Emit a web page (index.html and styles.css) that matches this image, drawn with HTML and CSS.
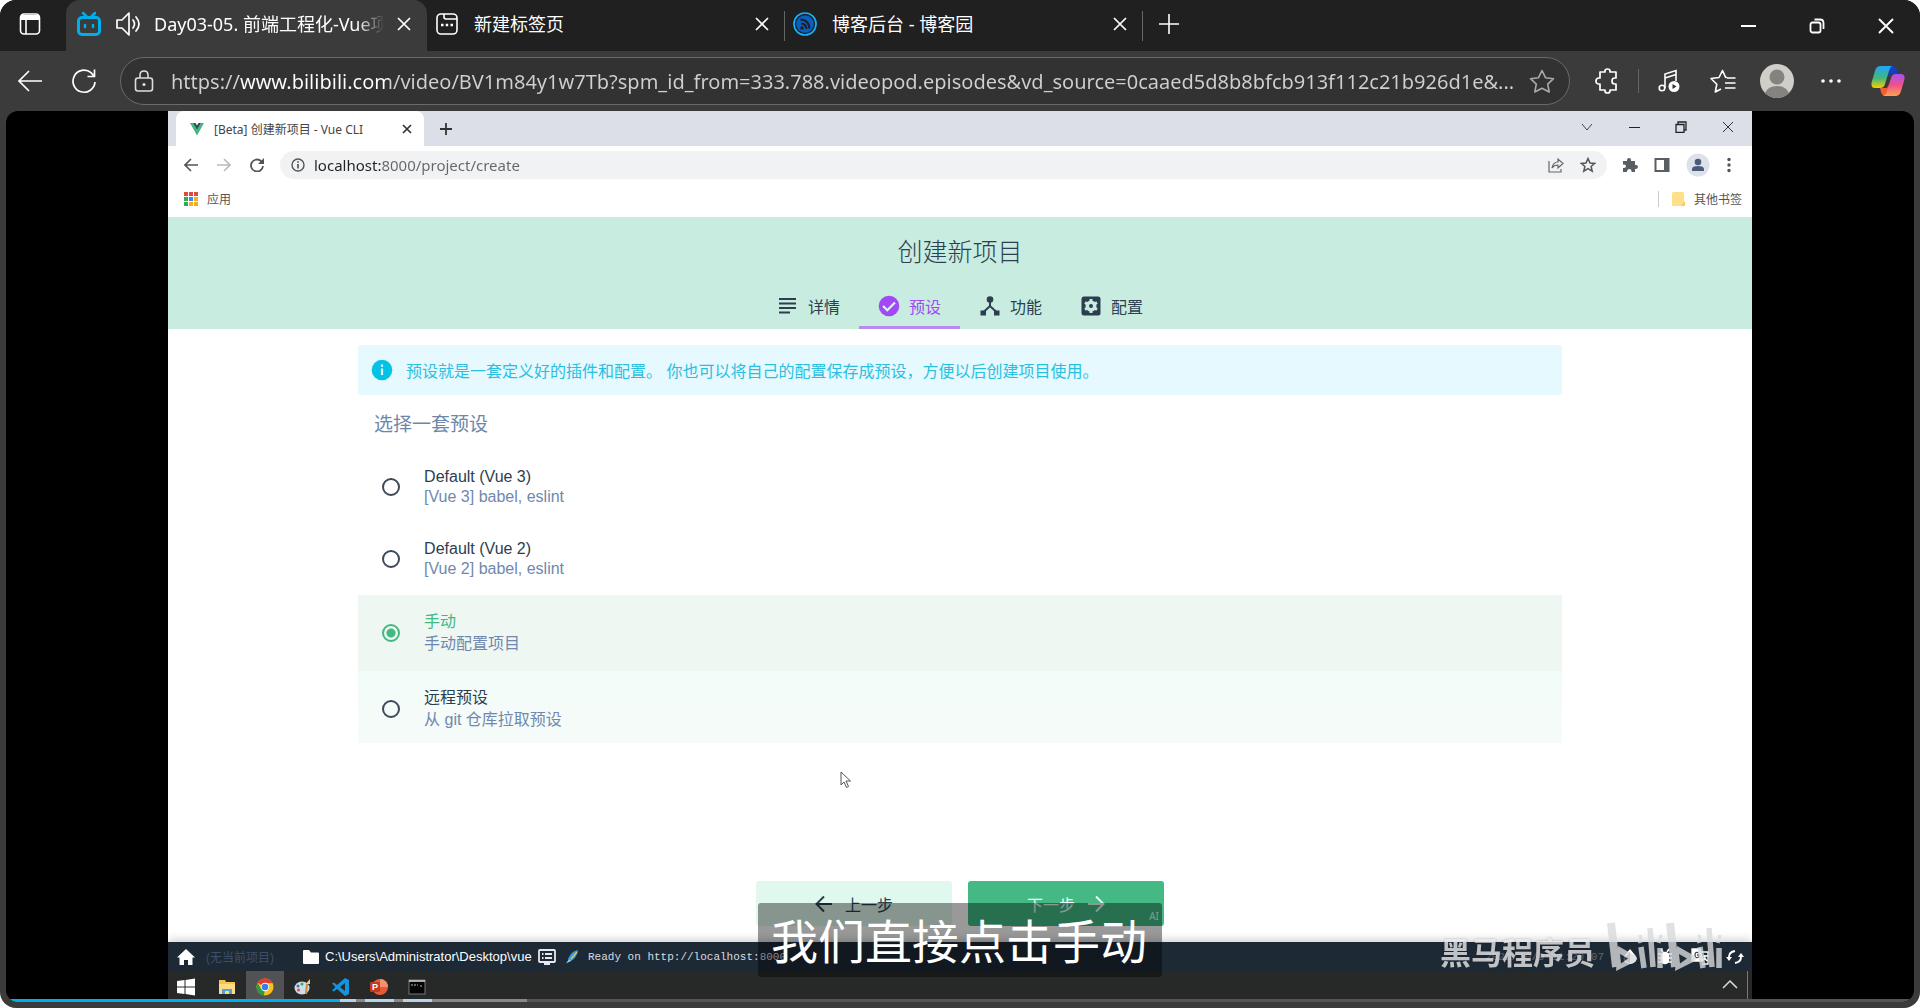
FILE: index.html
```html
<!DOCTYPE html>
<html lang="zh-CN">
<head>
<meta charset="utf-8">
<title>Day03-05. 前端工程化-Vue项目</title>
<link rel="stylesheet" href="styles.css">
</head>
<body>
<div class="window">
  <header class="tabstrip">
    <button class="tab-actions" aria-label="标签页操作">
      <svg width="24" height="24" viewBox="0 0 24 24" fill="none" stroke="#fff" stroke-width="1.6"><rect x="2.500" y="2" width="19" height="20" rx="3.500"/><path d="M3 5.500h18" stroke-width="5"/><path d="M8 7v15"/></svg>
    </button>
    <div class="tab tab-active">
      <svg width="26" height="26" viewBox="0 0 26 26" fill="none" stroke="#00aeec" stroke-width="3" stroke-linecap="round" stroke-linejoin="round"><rect x="2.500" y="6.500" width="21" height="17" rx="3.500"/><path d="M7 2l4 4M19 2l-4 4M9 14v2M17 14v2" stroke-width="2.500"/></svg>
      <svg class="sound" width="26" height="28" viewBox="0 0 26 28" fill="none" stroke="#fff" stroke-width="1.700" stroke-linejoin="round" stroke-linecap="round"><path d="M2 10v8h5l7 7V3L7 10z"/><path d="M18 10q3 4 0 8M21 7q6 7 0 14"/></svg>
      <span class="tab-title fade">Day03-05. 前端工程化-Vue项目</span>
      <button class="close" aria-label="关闭"><svg width="14" height="14" viewBox="0 0 14 14" stroke="#fff" stroke-width="1.700"><path d="M1 1l12 12M13 1L1 13"/></svg></button>
    </div>
    <div class="tab">
      <svg width="24" height="24" viewBox="0 0 24 24" fill="none" stroke="#fff" stroke-width="1.600"><rect x="2" y="2" width="20" height="20" rx="4"/><path d="M9 2v3q0 2 2 2h11"/><path d="M6 13h2.500M10.700 13h2.500M15.500 13H18" stroke-width="2.500"/></svg>
      <span class="tab-title">新建标签页</span>
      <button class="close" aria-label="关闭"><svg width="14" height="14" viewBox="0 0 14 14" stroke="#fff" stroke-width="1.700"><path d="M1 1l12 12M13 1L1 13"/></svg></button>
    </div>
    <div class="tab tab-divided">
      <svg width="24" height="24" viewBox="0 0 24 24" fill="none"><circle cx="12" cy="12" r="11" stroke="#1ab0f0" stroke-width="1.700" fill="#123"/><circle cx="12" cy="12" r="8.800" fill="#0b5fc0"/><path d="M8 11.500q5 0 5.500 5.500M7.500 7.500q8.500 .5 9 9" stroke="#202020" stroke-width="2.200"/><circle cx="9" cy="16" r="1.800" fill="#202020"/></svg>
      <span class="tab-title">博客后台 - 博客园</span>
      <button class="close" aria-label="关闭"><svg width="14" height="14" viewBox="0 0 14 14" stroke="#fff" stroke-width="1.700"><path d="M1 1l12 12M13 1L1 13"/></svg></button>
    </div>
    <button class="new-tab" aria-label="新建标签页"><svg width="22" height="22" viewBox="0 0 22 22" stroke="#fff" stroke-width="1.600"><path d="M11 1v20M1 11h20"/></svg></button>
    <div class="window-controls">
      <button aria-label="最小化"><svg width="16" height="16" viewBox="0 0 16 16" stroke="#fff" stroke-width="2"><path d="M1 8h15"/></svg></button>
      <button aria-label="还原"><svg width="16" height="16" viewBox="0 0 16 16" fill="none" stroke="#fff" stroke-width="1.800"><rect x="1.500" y="4.500" width="10" height="10" rx="2"/><path d="M5.500 1.500H11q3.500 0 3.500 3.500v6"/></svg></button>
      <button aria-label="关闭"><svg width="16" height="16" viewBox="0 0 16 16" stroke="#fff" stroke-width="1.900"><path d="M1 1l14 14M15 1L1 15"/></svg></button>
    </div>
  </header>

  <div class="toolbar">
    <button class="nav" aria-label="返回"><svg width="26" height="22" viewBox="0 0 26 22" fill="none" stroke="#fff" stroke-width="1.700"><path d="M25 11H2M12 1L2 11l10 10"/></svg></button>
    <button class="nav" aria-label="刷新"><svg width="26" height="26" viewBox="0 0 26 26" fill="none" stroke="#fff" stroke-width="1.700"><path d="M24 14a11 11 0 1 1-4-9.300L23 8M23.500 1.500V8.500H16.500"/></svg></button>
    <div class="omnibox">
      <svg width="22" height="22" viewBox="0 0 22 22" fill="none" stroke="#ddd" stroke-width="1.600"><rect x="2.500" y="8" width="17" height="13" rx="2.500"/><path d="M7 8V5q0-4 4-4t4 4v3"/><circle cx="11" cy="14.500" r=".8" fill="#ddd"/></svg>
      <input class="url" type="text" aria-label="地址栏" value="https://www.bilibili.com/video/BV1m84y1w7Tb?spm_id_from=333.788.videopod.episodes&amp;vd_source=0caaed5d8b8bfcb913f112c21b926d1e&amp;...">
      <button aria-label="收藏"><svg width="26" height="24" viewBox="0 0 26 24" fill="none" stroke="#aaa" stroke-width="1.600" stroke-linejoin="round"><path d="M13 1.500l3.500 7.200 8 1-5.800 5.500 1.500 7.800L13 19.200 5.800 23l1.500-7.800L1.500 9.700l8-1z"/></svg></button>
    </div>
    <div class="tools">
      <button class="tool" aria-label="扩展"><svg width="24" height="26" viewBox="0 0 24 26" fill="none" stroke="#fff" stroke-width="1.700" stroke-linejoin="round"><path d="M5 4h5V3q0-2 2.500-2T15 3v1h6v6h-1.500q-2.500 0-2.500 3t2.500 3H21v6h-6v1q0 2-2.500 2T10 23v-1H5v-6H4q-3 0-3-3t3-3h1z"/></svg></button>
      <span class="tool-sep"></span>
      <button class="tool" aria-label="媒体控制"><svg width="24" height="24" viewBox="0 0 24 24" fill="none" stroke="#fff" stroke-width="1.600"><circle cx="5" cy="19" r="2.800"/><path d="M8 19V5l11-3.500V12M8 9l11-3.500"/><circle cx="17" cy="17.500" r="5.500" fill="#fff" stroke="none"/><path d="M15.500 15v5l4-2.500z" fill="#333" stroke="none"/></svg></button>
      <button class="tool" aria-label="收藏夹"><svg width="26" height="24" viewBox="0 0 26 24" fill="none" stroke="#fff" stroke-width="1.600" stroke-linejoin="round"><path d="M17 8.500l-1.500-.3L12.500 1.500 9 8.500l-8 1 5.800 5.700L5.300 23l5.700-3M17 9h8.500M15 14h10.500M15 19h10.500"/></svg></button>
      <button class="tool" aria-label="个人资料"><svg width="34" height="34" viewBox="0 0 34 34"><circle cx="17" cy="17" r="17" fill="#cfcec9"/><circle cx="17" cy="13" r="7.500" fill="#85837f"/><path d="M5 29q3-7 12-7t12 7q-5 5-12 5T5 29z" fill="#85837f"/></svg></button>
      <button class="tool" aria-label="更多"><svg width="22" height="6" viewBox="0 0 22 6" fill="#fff"><circle cx="3" cy="3" r="1.800"/><circle cx="11" cy="3" r="1.800"/><circle cx="19" cy="3" r="1.800"/></svg></button>
      <button class="tool copilot" aria-label="Copilot"><svg width="34" height="32" viewBox="0 0 34 32"><defs><linearGradient id="cpA" x1="0" y1="0" x2="0" y2="1"><stop offset="0" stop-color="#20a7f5"/><stop offset=".55" stop-color="#43b77b"/><stop offset="1" stop-color="#f6cf00"/></linearGradient><linearGradient id="cpB" x1="0" y1="0" x2="0" y2="1"><stop offset="0" stop-color="#a553f0"/><stop offset=".5" stop-color="#f0508b"/><stop offset="1" stop-color="#ffa252"/></linearGradient></defs><path d="M17 1h4q4 0 5 4l1 4h-6q-4 0-5 4z" fill="#123fc4"/><path d="M9 23h7l2-4-1 9q-1 3-3 3-3 0-4-4z" fill="#f0602f"/><path d="M10 1h11q-2 1-3 5l-4 13q-1 4-5 4H4q-5 0-3-7L4 6q1-5 6-5z" fill="url(#cpA)"/><path d="M24 31H12q3-1 4-5l4-13q1-4 5-4h5q5 0 3 7l-3 10q-1 5-6 5z" fill="url(#cpB)"/></svg></button>
    </div>
  </div>

  <main class="stage">
    <div class="video">
      <div class="c-tabs">
        <div class="c-tab">
          <svg width="14" height="14" viewBox="0 0 14 14"><path d="M0 1h3l4 7 4-7h3L7 13.500z" fill="#41b883"/><path d="M3 1h2.500L7 3.500 8.500 1H11L7 8z" fill="#35495e"/></svg>
          <span>[Beta] 创建新项目 - Vue CLI</span>
          <button aria-label="关闭"><svg width="10" height="10" viewBox="0 0 10 10" stroke="#333" stroke-width="1.700"><path d="M1 1l8 8M9 1L1 9"/></svg></button>
        </div>
        <button class="c-new" aria-label="新标签"><svg width="14" height="14" viewBox="0 0 14 14" stroke="#333" stroke-width="1.800"><path d="M7 1v12M1 7h12"/></svg></button>
        <div class="c-controls">
          <svg width="12" height="12" viewBox="0 0 12 12" fill="none" stroke="#444"><path d="M1 3l5 6 5-6"/></svg>
          <svg width="12" height="12" viewBox="0 0 12 12" fill="none" stroke="#222"><path d="M1 6.500h11"/></svg>
          <svg width="12" height="12" viewBox="0 0 12 12" fill="none" stroke="#222" stroke-width="1.300"><path d="M1 3.500h8v8H1zM3 3V1h8v8H9"/></svg>
          <svg width="12" height="12" viewBox="0 0 12 12" fill="none" stroke="#333"><path d="M1 1l10 10M11 1L1 11"/></svg>
        </div>
      </div>
      <div class="c-toolbar">
        <div class="c-nav">
          <svg width="14" height="14" viewBox="0 0 14 14" fill="none" stroke="#555" stroke-width="1.600"><path d="M14 7H1M7 1L1 7l6 6"/></svg>
          <svg width="14" height="14" viewBox="0 0 14 14" fill="none" stroke="#bbb" stroke-width="1.600"><path d="M0 7h13M7 1l6 6-6 6"/></svg>
          <svg width="14" height="14" viewBox="0 0 14 14" fill="none" stroke="#555" stroke-width="1.800"><path d="M13 8a6 6 0 1 1-2-5l2 2"/><path d="M14 0v6H8z" fill="#555" stroke="none"/></svg>
        </div>
        <div class="c-omnibox">
          <svg width="14" height="14" viewBox="0 0 14 14" fill="none" stroke="#555" stroke-width="1.400"><circle cx="7" cy="7" r="6"/><path d="M7 6v4.500M7 3.200v1.500" stroke-width="1.700"/></svg>
          <input class="c-url" type="text" aria-label="网址" value="localhost:8000/project/create">
          <svg width="16" height="16" viewBox="0 0 16 16" fill="none" stroke="#666" stroke-width="1.200"><path d="M1 4v11h12v-3M4 11q1-6 6-6V2l5 4.500-5 4.500V8q-4 0-6 3z"/></svg>
          <svg width="16" height="16" viewBox="0 0 16 16" fill="none" stroke="#555" stroke-width="1.500"><path d="M8 1.500l2 4.500 4.700.4-3.600 3.100 1.100 4.700L8 11.700l-4.200 2.500 1.100-4.700L1.300 6.400 6 6z"/></svg>
        </div>
        <div class="c-tools">
          <svg width="16" height="16" viewBox="0 0 16 16" fill="#5a5d62"><path d="M1 4h4V3q0-2 2-2t2 2v1h4v4h1q2 0 2 1.800T14 12h-1v3H9.500v-1Q9.500 12 7.500 12T5 14v1H1v-4h1q2 0 2-1.800T2 7.500H1z"/></svg>
          <svg width="16" height="16" viewBox="0 0 16 16" fill="none" stroke="#5a5d62" stroke-width="2"><path d="M1.500 2h13v12h-13z"/><path d="M12 2v12" stroke-width="4"/></svg>
          <svg width="24" height="24" viewBox="0 0 24 24"><circle cx="12" cy="12" r="11.500" fill="#dde1ea"/><circle cx="12" cy="9" r="3.300" fill="#4b5b78"/><path d="M6 18v-2q0-3 6-3t6 3v2z" fill="#4b5b78"/></svg>
          <svg width="6" height="16" viewBox="0 0 6 16" fill="#555"><circle cx="3" cy="2.500" r="1.700"/><circle cx="3" cy="8" r="1.700"/><circle cx="3" cy="13.500" r="1.700"/></svg>
        </div>
      </div>
      <div class="c-bookmarks">
        <svg width="14" height="14" viewBox="0 0 14 14"><path d="M0 0h4v4H0zM5 0h4v4H5zM10 0h4v4h-4z" fill="#e04a3f"/><path d="M0 5h4v4H0zM0 10h4v4H0z" fill="#34a853"/><path d="M5 5h4v4H5z" fill="#4285f4"/><path d="M10 5h4v4h-4zM5 10h4v4H5zM10 10h4v4h-4z" fill="#f2b01e"/></svg>
        <a href="#">应用</a>
        <span class="c-other">
          <svg width="14" height="16" viewBox="0 0 14 16"><rect x="1" y="1" width="12" height="14" rx="1.500" fill="#ffe08a"/><path d="M10 15l4-5v4q0 1-1 1z" fill="#f3cb55"/></svg>
          <a href="#">其他书签</a>
        </span>
      </div>

      <section class="head">
        <h1>创建新项目</h1>
        <nav class="steps">
          <a href="#"><svg width="22" height="22" viewBox="0 0 22 22" stroke="#2c3e50" stroke-width="2"><path d="M2 4h17M2 8.500h17M2 13h17M2 17.500h11"/></svg>详情</a>
          <a href="#" class="current"><svg width="22" height="22" viewBox="0 0 22 22" fill="none"><circle cx="11" cy="11" r="10.300" fill="#a249f5"/><path d="M5 11l4.300 4.300L17 7.500" stroke="#d8f5ee" stroke-width="2.200"/></svg>预设</a>
          <a href="#"><svg width="22" height="22" viewBox="0 0 22 22" fill="#2c3e50"><circle cx="11" cy="4.500" r="3.300"/><path d="M1.500 15.500h5.500v5H1.500zM15 15.500h5.500v5H15z"/><path d="M11 5v7M4 17.500l7-6.500 7 6.500" fill="none" stroke="#2c3e50" stroke-width="2"/></svg>功能</a>
          <a href="#"><svg width="22" height="22" viewBox="0 0 22 22"><rect x="1.500" y="1.500" width="19" height="19" rx="2.500" fill="#2c3e50"/><circle cx="11" cy="11" r="5.500" fill="#c8ecdf"/><path d="M11 4v14M5 7.500l12 7M5 14.500l12-7" stroke="#c8ecdf" stroke-width="3"/><circle cx="11" cy="11" r="2" fill="#2c3e50"/></svg>配置</a>
        </nav>
      </section>

      <form class="form">
        <p class="notice"><svg width="22" height="22" viewBox="0 0 22 22"><circle cx="11" cy="11" r="10.300" fill="#03c2e6"/><path d="M11 9.500v6.500M11 5.500v2.300" stroke="#e5f9ff" stroke-width="2.200"/></svg><span>预设就是一套定义好的插件和配置。 你也可以将自己的配置保存成预设，方便以后创建项目使用。</span></p>
        <h2>选择一套预设</h2>
        <label class="preset"><input type="radio" name="preset"><span><b>Default (Vue 3)</b><i>[Vue 3] babel, eslint</i></span></label>
        <label class="preset"><input type="radio" name="preset"><span><b>Default (Vue 2)</b><i>[Vue 2] babel, eslint</i></span></label>
        <label class="preset cjk selected"><input type="radio" name="preset" checked><span><b>手动</b><i>手动配置项目</i></span></label>
        <label class="preset cjk leaving"><input type="radio" name="preset"><span><b>远程预设</b><i>从 git 仓库拉取预设</i></span></label>
        <div class="actions">
          <button type="button"><svg width="18" height="18" viewBox="0 0 18 18" fill="none" stroke="#2c3e50" stroke-width="2"><path d="M17 9H2M9 1.500L1.500 9 9 16.500"/></svg>上一步</button>
          <button type="button" class="primary">下一步<svg width="18" height="18" viewBox="0 0 18 18" fill="none" stroke="#e8fff5" stroke-width="2"><path d="M1 9h15M9 1.500L16.500 9 9 16.500"/></svg></button>
        </div>
      </form>

      <div class="status">
        <svg width="18" height="18" viewBox="0 0 18 18" fill="#fff"><path d="M9 1L0 9.500h2.500V17H7v-5h4v5h4.500V9.500H18z"/></svg>
        <span class="no-project">(无当前项目)</span>
        <svg width="18" height="18" viewBox="0 0 18 18" fill="#fff"><path d="M1 3q0-1 1-1h5l2 2.500h7q1 0 1 1V15q0 1-1 1H2q-1 0-1-1z"/></svg>
        <span class="path">C:\Users\Administrator\Desktop\vue</span>
        <svg width="18" height="18" viewBox="0 0 18 18" fill="none" stroke="#e8e8ee" stroke-width="1.800"><rect x="1" y="2" width="16" height="12" rx="1"/><path d="M4 6h1.500M7 6h7M4 10h1.500M7 10h7M6 16h6"/></svg>
        <svg class="rocket" width="14" height="14" viewBox="0 0 14 14"><path d="M13 0Q6 1 3 9l2.500 2.500Q12 8 13 0z" fill="#2d9be0"/><path d="M6 9l6-7" stroke="#f3c33c" stroke-width="1.300"/><path d="M4 9l-3 4.500L6 11z" fill="#9bc7ea"/></svg>
        <span class="log">Ready on http://localhost:8000</span>
        <span class="time">2022/10/9 11:20:07</span>
        <span class="status-icons">
          <svg width="18" height="18" viewBox="0 0 18 18"><path d="M9 1l5 6q3 4 0 7-5 4-10 0-3-3 0-7z" fill="#fff"/><path d="M9 4v11q-5-1-5-5z" fill="#667078"/></svg>
          <svg width="18" height="18" viewBox="0 0 18 18" fill="#fff" stroke="#fff" stroke-width="1.600"><rect x="5.500" y="4.500" width="7" height="11" rx="3.500"/><path d="M2 6h14M2 10h14M2 14h14M5 1l2 3M13 1l-2 3" fill="none"/></svg>
          <svg width="18" height="18" viewBox="0 0 18 18" fill="none" stroke="#fff" stroke-width="1.300"><path d="M1 1h8l3 12H1z" fill="#fff"/><path d="M8 5Q4 3 4 7t4 2V7H6" stroke="#445"/><path d="M10 4h7v12h-6M12 8h5M14 7q0 4-3 6M13 9l3 4"/></svg>
          <svg width="18" height="18" viewBox="0 0 18 18" fill="none" stroke="#fff" stroke-width="1.900"><path d="M3 12V9q0-5 6-6M15 6v3q0 5-6 6"/><path d="M0 9h6l-3 4zM12 9h6l-3-4z" fill="#fff" stroke="none"/></svg>
        </span>
      </div>

      <div class="taskbar">
        <button class="start" aria-label="开始"><svg width="18" height="18" viewBox="0 0 18 18" fill="#fff"><path d="M0 3l7.500-1v6.500H0zM8.500 2L18 .5v8H8.500zM0 9.500h7.500V16L0 15zM8.500 9.500H18v8L8.500 16z"/></svg></button>
        <button aria-label="文件资源管理器"><svg width="18" height="18" viewBox="0 0 18 18"><path d="M1 2h6l1 2h9v12H1z" fill="#f4c451"/><path d="M1 6h16v10H1z" fill="#fbdc83"/><path d="M4 16v-5h10v5h-3v-3H7v3z" fill="#51a3da"/></svg></button>
        <button class="running" aria-label="Chrome"><svg width="18" height="18" viewBox="0 0 18 18"><circle cx="9" cy="9" r="8.500" fill="#fbc116"/><path d="M9 9L1.600 4.800A8.500 8.500 0 0 1 16.500 5H9z" fill="#e33b2e"/><path d="M9 9l-1 8.400A8.500 8.500 0 0 1 1.600 4.800L5 11z" fill="#269c4b"/><circle cx="9" cy="9" r="4.200" fill="#fff"/><circle cx="9" cy="9" r="3.300" fill="#3a7bed"/></svg></button>
        <button aria-label="画图"><svg width="18" height="18" viewBox="0 0 18 18"><ellipse cx="8" cy="10" rx="7.500" ry="6.500" fill="#cfdce8"/><circle cx="4" cy="8" r="1.500" fill="#3578c6"/><circle cx="8" cy="6" r="1.500" fill="#45a35b"/><circle cx="4.500" cy="12" r="1.500" fill="#db5040"/><path d="M12 16l1-10" stroke="#c9893c" stroke-width="2"/><path d="M11.500 6L16 1v5z" fill="#e7c78f"/></svg></button>
        <button aria-label="VS Code"><svg width="18" height="18" viewBox="0 0 18 18"><path d="M13 0l4 2v14l-4 2-8-7-3 2.500L0 12.500 3.500 9 0 5.500l2-1L5 7zM13 5L8 9l5 4z" fill="#1593dc" fill-rule="evenodd"/></svg></button>
        <button aria-label="PowerPoint"><svg width="18" height="18" viewBox="0 0 18 18"><circle cx="10" cy="9" r="8" fill="#e25a37"/><path d="M10 1a8 8 0 0 1 8 8h-8z" fill="#f68e70"/><rect x="0" y="4" width="10" height="10" rx="1" fill="#c33a1d"/><text x="2" y="12" class="ppt">P</text></svg></button>
        <button aria-label="命令提示符"><svg width="18" height="18" viewBox="0 0 18 18"><rect x="1" y="2" width="16" height="14" fill="#050505" stroke="#777"/><path d="M1 3h16" stroke="#ddd" stroke-width="1.500"/><path d="M3 7h7M12 8h3" stroke="#bbb" stroke-dasharray="2 1"/></svg></button>
        <span class="tray"><svg width="16" height="16" viewBox="0 0 16 16" fill="none" stroke="#ddd" stroke-width="1.500"><path d="M1 11l7-7 7 7"/></svg></span>
      </div>

      <svg class="cursor" width="12" height="18" viewBox="0 0 12 18" fill="#fff" stroke="#555"><path d="M1 1v13l3-3 2.500 5.500 2-1L6 10h4.500z"/></svg>
    </div>

    <p class="subtitle">我们直接点击手动<small>AI</small></p>
    <div class="watermark">
      <span>黑马程序员</span>
      <svg width="116" height="52" viewBox="0 0 116 52" role="img" aria-label="bilibili" fill="none" stroke="#d9dadb"><g id="mark"><path d="M4 2l5 44" stroke-width="8"/><path d="M11 25l17 9.500q4 3 0 6L9 50z" fill="#d9dadb" stroke="none"/><path d="M13 33l8 4.500-7 5z" fill="#1f2b35" stroke="none"/><path d="M34 26l3 21M43 7l3 39M53 27v20" stroke-width="5.500"/><path d="M31 21l4-1M50 20l4 1M33 14l1 4M54 14l-1 4" stroke-width="3"/></g><use href="#mark" x="59"/></svg>
    </div>
    <div class="progress"><span class="played"></span><span class="buffered"></span></div>
  </main>
</div>
</body>
</html>
```
FILE: styles.css
```css
* { box-sizing: border-box; }
body {
  margin: 0;
  background: #fff;
  font-family: "Noto Sans", "Noto Sans CJK SC", sans-serif;
}
h1, h2, p { margin: 0; font-weight: 400; }
button { padding: 0; border: 0; background: none; font: inherit; color: inherit; display: flex; align-items: center; justify-content: center; }
input { font: inherit; border: 0; outline: 0; background: none; padding: 0; min-width: 0; }
a { color: inherit; text-decoration: none; }
svg { display: block; flex: none; }

.window {
  display: flex;
  flex-direction: column;
  height: 100vh;
  border-radius: 16px;
  overflow: hidden;
  background: #3b3b3b;
  color: #fff;
}

/* Browser tab strip */
.tabstrip { display: flex; height: 51px; background: #202020; font-size: 18px; }
.tab-actions { width: 66px; padding: 0 6px 3px 0; border-radius: 0 0 12px 0; }
.tab { display: flex; align-items: center; flex: 0 1 358px; gap: 15px; padding: 0 16px 4px 8px; min-width: 0; }
.tab-active { flex-basis: 361px; background: #3b3b3b; border-radius: 14px 14px 0 0; padding-left: 10px; gap: 13px; }
.tab-title { flex: 1; white-space: nowrap; overflow: hidden; line-height: 28px; }
.fade { -webkit-mask-image: linear-gradient(90deg, #000 88%, transparent); mask-image: linear-gradient(90deg, #000 88%, transparent); }
.tab-divided { position: relative; }
.tab-divided::before, .tab-divided::after { content: ""; position: absolute; top: 11px; width: 1px; height: 30px; background: #666; }
.tab-divided::before { left: -1px; }
.tab-divided::after { right: 0; }
.new-tab { width: 52px; padding-bottom: 4px; }
.window-controls { margin-left: auto; display: flex; }
.window-controls button { width: 69px; }

/* Browser toolbar */
.toolbar { display: flex; align-items: center; flex: none; height: 60px; padding: 0 0 0 3px; }
.nav { width: 54px; height: 48px; }
.omnibox {
  flex: 1;
  display: flex;
  align-items: center;
  gap: 16px;
  height: 48px;
  margin-left: 9px;
  padding: 0 14px 0 12px;
  border: 1px solid #6a6a6a;
  border-radius: 24px;
  background: #323232;
  min-width: 0;
}
.url {
  flex: 1;
  height: 32px;
  font-size: 20px;
  color: transparent;
  background: linear-gradient(90deg, #d0d0d0 68px, #fff 68px, #fff 218px, #d0d0d0 218px);
  -webkit-background-clip: text;
  background-clip: text;
}
.tools { display: flex; align-items: center; width: 350px; padding-left: 10px; }
.tool { width: 54px; height: 48px; }
.tool-sep { width: 1px; height: 24px; margin: 0 3px 0 4px; background: #666; }
.copilot { width: 60px; }

/* Page area with the player */
.stage {
  position: relative;
  flex: 1;
  display: flex;
  justify-content: center;
  min-height: 0;
  margin: 0 6px 6px;
  border-radius: 12px;
  overflow: hidden;
  background: #000;
}
.video {
  position: relative;
  display: flex;
  flex-direction: column;
  aspect-ratio: 16 / 9;
  background: #fff;
  color: #2c3e50;
}

/* Recorded browser */
.c-tabs { display: flex; height: 35px; padding-left: 8px; background: #dddfe8; }
.c-tab { display: flex; align-items: center; gap: 10px; width: 248px; padding: 0 12px 0 14px; border-radius: 8px 8px 0 0; background: #fff; font-size: 12px; color: #444; }
.c-tab span { flex: 1; white-space: nowrap; }
.c-new { width: 44px; }
.c-controls { display: flex; align-items: center; gap: 35px; margin-left: auto; padding: 0 18px 4px 0; }
.c-toolbar { display: flex; align-items: center; height: 37px; padding: 0 20px 0 16px; }
.c-nav { display: flex; gap: 19px; width: 96px; }
.c-omnibox { flex: 1; display: flex; align-items: center; gap: 16px; height: 28px; padding: 0 11px; border-radius: 14px; background: #f1f2f4; }
.c-url {
  flex: 1;
  margin-left: -7px;
  height: 24px;
  font-size: 15px;
  color: transparent;
  background: linear-gradient(90deg, #222 67px, #666 67px);
  -webkit-background-clip: text;
  background-clip: text;
}
.c-tools { display: flex; align-items: center; gap: 16px; padding-left: 15px; }
.c-bookmarks { display: flex; align-items: center; gap: 9px; height: 34px; padding: 0 10px 2px 16px; font-size: 12px; color: #555; }
.c-other { display: flex; align-items: center; gap: 9px; height: 16px; margin-left: auto; padding-left: 12px; border-left: 1px solid #ccc; }

/* Wizard header */
.head { display: flex; flex-direction: column; align-items: center; justify-content: space-between; height: 112px; padding-top: 16px; background: #c8ecdf; }
.head h1 { font-size: 25px; line-height: 36px; font-weight: 300; }
.steps { display: flex; font-size: 16px; }
.steps a { display: flex; align-items: center; justify-content: center; gap: 9px; width: 101px; height: 46px; border-bottom: 3px solid transparent; padding-top: 3px; }
.steps .current { color: #a249f5; border-color: #b98af0; }

/* Preset form */
.form { flex: 1; display: flex; flex-direction: column; padding: 16px 12%; font-family: "Liberation Sans", "Noto Sans CJK SC", sans-serif; font-size: 16px; }
.notice { display: flex; align-items: center; gap: 13px; height: 50px; padding: 0 13px; border-radius: 3px; background: #e5f9ff; color: #2abfdf; }
.form h2 { margin: 18px 0 14px; padding-left: 16px; font-size: 19px; line-height: 24px; color: #6e87a8; }
.preset { display: flex; align-items: center; gap: 24px; padding: 16px 24px; line-height: 20px; }
.preset b, .preset i { display: block; font-weight: 400; font-style: normal; }
.preset i { color: #7088ae; }
.preset input { appearance: none; width: 18px; height: 18px; margin: 0; border: 2px solid #3c4a5c; border-radius: 50%; }
.cjk { line-height: 22px; }
.selected { background: #eff7f3; }
.selected b { color: #42b983; }
.selected input { border-color: #42b983; background: radial-gradient(circle, #42b983 4px, transparent 5px); }
.leaving { background: linear-gradient(#f2fcf8, #f6fbf9 95%, transparent 95%); }
.actions { display: flex; justify-content: center; gap: 16px; margin-top: auto; }
.actions button { gap: 12px; width: 196px; height: 45px; border-radius: 3px; background: #e0f8ed; }
.actions .primary { background: #44b984; color: #e8fff5; }

/* Project status bar */
.status { display: flex; align-items: center; height: 29px; padding: 0 8px 0 9px; background: #1d2935; color: #fff; font: 13px "Liberation Sans", "Noto Sans CJK SC", sans-serif; box-shadow: 0 -2px 10px #0003; white-space: nowrap; }
.no-project { width: 107px; padding-left: 11px; color: #3d4f68; font-size: 12px; }
.path { width: 218px; padding-left: 5px; font-size: 12px; }
.path { font-size: 13px; }
.rocket { margin-left: 9px; }
.log, .time { font: 11px "Liberation Mono", monospace; }
.log { padding-left: 9px; color: #d8dce0; }
.time { margin-left: auto; color: #5d6872; }
.status-icons { display: flex; gap: 17px; margin-left: 17px; }

/* Recorded taskbar */
.taskbar { display: flex; height: 31px; padding-right: 4px; background: #272828; }
.taskbar button { width: 38px; }
.taskbar .start { width: 40px; padding-right: 4px; }
.running { background: #505253; }
.ppt { font: bold 9px "Liberation Sans", sans-serif; fill: #fff; }
.tray { display: flex; align-items: center; margin-left: auto; padding: 0 9px 3px 0; border-right: 1px solid #777; }

/* Overlays on the player */
.cursor { position: absolute; left: 672px; top: 660px; }
.subtitle { position: absolute; left: 50%; bottom: 25px; transform: translateX(-50%); width: 404px; height: 74px; padding: 3px 0 0 13px; border-radius: 3px; background: #0006; font-size: 47px; line-height: 70px; white-space: nowrap; }
.subtitle small { position: absolute; right: 3px; top: 7px; font-size: 10px; line-height: 12px; color: #ffffff60; }
.watermark { position: absolute; right: 191px; bottom: 29px; display: flex; align-items: flex-end; gap: 12px; opacity: .8; color: #e9e9e9; font-size: 31px; line-height: 42px; font-weight: 700; text-shadow: 0 0 2px #0005; }
.progress { position: absolute; left: 0; right: 0; bottom: 0; display: flex; height: 3px; background: #555; }
.played { width: 17.5%; background: #00aeec; }
.buffered { width: 9.8%; background: linear-gradient(90deg, #b5d4ea 16px, #888 16px, #888 25px, #b5d4ea 25px, #b5d4ea 54px, #888 54px, #888 63px, #b5d4ea 63px, #b5d4ea 92px, #888 92px); }
```
